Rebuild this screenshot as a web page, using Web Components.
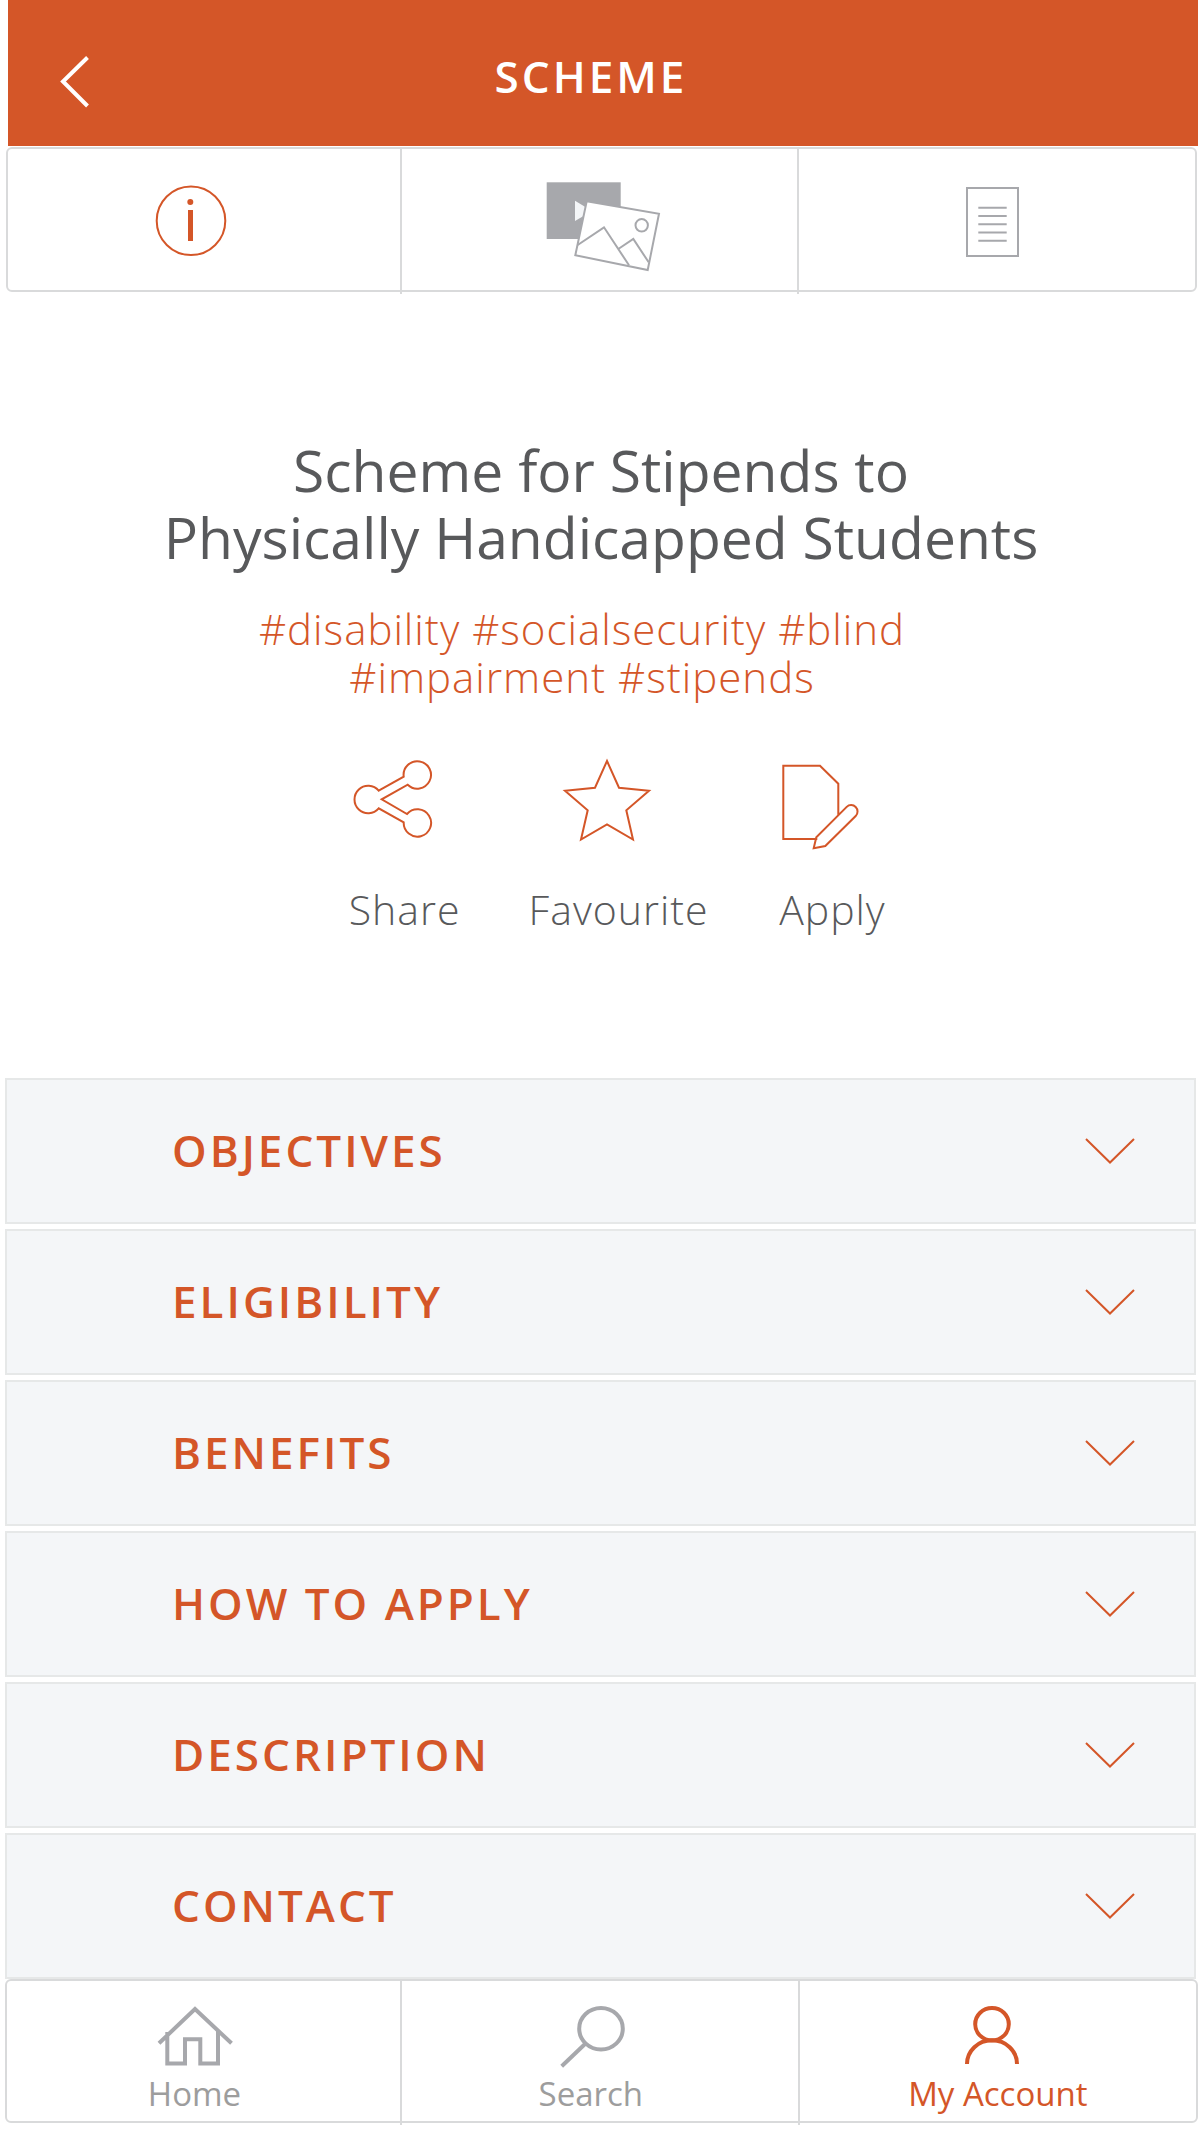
<!DOCTYPE html>
<html lang="en">
<head>
<meta charset="utf-8">
<meta name="viewport" content="width=device-width, initial-scale=1">
<title>Scheme</title>
<style>
  html { background: #fff; }
  body {
    margin: 0;
    font-family: "Open Sans", "Noto Sans", sans-serif;
    --accent: #d45628;
    --ink: #58595b;
    --muted: #a7a8ac;
    --line: #d9dadb;
    --panel: #f4f6f8;
    --panel-line: #e6e8e8;
  }
</style>
</head>
<body>
<scheme-page></scheme-page>

<script>
const ICONS = {
  back: ['0 0 30 54', 30, 54, '<path d="M27.500 2.500 3 26.500 27.500 51" stroke-width="4"/>'],
  info: ['0 0 120 91', 120, 91,
    '<circle cx="46" cy="46.700" r="34.300" stroke-width="2"/><g fill="currentColor" stroke="none"><circle cx="45.300" cy="28" r="3"/><rect x="43" y="36" width="5" height="31"/></g>'],
  media: ['0 0 120 91', 120, 91,
    '<rect x="5.700" y="8.300" width="74" height="56.700" fill="currentColor" stroke="none"/>' +
    '<path d="M34 26.700 51 36.900 34 47z" fill="#f4f6f8" stroke="none"/>' +
    '<g stroke-width="2"><path d="M45.700 27.300 118 39.700 106.700 96 34.300 81.300z" fill="#fff"/>' +
    '<circle cx="100.700" cy="51.300" r="6.200"/><path d="M36.700 71 63 53.300 88 91.300M77.300 75 92.300 65 107.700 88.300"/></g>'],
  doc: ['0 0 120 91', 120, 91,
    '<g stroke-width="2"><rect x="30" y="14" width="51" height="68"/><path d="M41.300 33.700h28.400M41.300 42h28.400M41.300 50.200h28.400M41.300 58.500h28.400M41.300 66.700h28.400"/></g>'],
  share: ['0 0 88 90', 88, 90,
    '<path stroke-width="2" d="M29.700 31.700 54.700 17.700A13.700 13.700 0 1 1 58.700 25.700L32.700 40.300 58 55A13.700 13.700 0 1 1 54.700 63.300L29.700 49.300A13.700 13.700 0 1 1 29.700 31.700z"/>'],
  star: ['0 0 88 90', 88, 90,
    '<path stroke-width="2" d="M44 2 56 28.700 86 31.700 63.300 51.300 70 80.500 44 65.300 18 80.500 24.700 51.300 2 31.700 32 28.700z"/>'],
  apply: ['0 0 88 90', 88, 90,
    '<path stroke-width="2" d="M62.300 56.300V24.700L44 6.700H7.300V80H41.300M37.700 89.300 40.300 78.300 70.700 47.900A6.400 6.400 0 0 1 79.700 57L49.300 87z"/>'],
  chevron: ['0 0 50 26', 50, 26, '<path d="M1 1 25 24.500 49 1" stroke-width="2"/>'],
  home: ['0 0 76 62', 76, 62,
    '<path stroke-width="4" d="M2 37.300 38 3 74.500 37.300M10.300 26V57.500H28V33.300H43.300V57.500H61V24"/>'],
  search: ['0 0 76 62', 76, 62,
    '<g stroke-width="4"><ellipse cx="48" cy="22.700" rx="21.800" ry="20.700"/><path d="M32 38 8.700 60.300"/></g>'],
  account: ['0 0 76 62', 76, 62,
    '<g stroke-width="4"><ellipse cx="32" cy="18.200" rx="16.800" ry="16.200"/><path d="M7 58A25 23.700 0 0 1 57 58"/></g>']
};

function define(name, css, html) {
  const tpl = document.createElement('template');
  tpl.innerHTML = `<style>*{box-sizing:border-box}${css}</style>${html}`;
  customElements.define(name, class extends HTMLElement {
    constructor() {
      super();
      this.attachShadow({ mode: 'open' }).append(tpl.content.cloneNode(true));
    }
    connectedCallback() {
      const label = this.getAttribute('label');
      const control = this.shadowRoot.querySelector('[data-control]');
      if (control && label) control.setAttribute('aria-label', label);
    }
  });
}

customElements.define('line-icon', class extends HTMLElement {
  constructor() {
    super();
    this.attachShadow({ mode: 'open' });
  }
  connectedCallback() {
    const [box, w, h, art] = ICONS[this.getAttribute('name')];
    this.shadowRoot.innerHTML =
      `<style>:host{display:block;flex:none}svg{display:block;overflow:visible}</style>
       <svg viewBox="${box}" width="${w}" height="${h}" fill="none" stroke="currentColor" aria-hidden="true">${art}</svg>`;
  }
});

define('app-header', `
  :host { display: grid; grid-template-columns: 107px 1fr 131px; align-items: start;
    height: 146px; box-sizing: border-box; padding-top: 46px; background: var(--accent); color: #fff; }
  button { display: grid; place-items: center; width: 100%; height: 72px; padding: 0 0 0 26px;
    border: 0; background: none; color: inherit; cursor: pointer; }
  h1 { margin: 0; text-align: center; font-size: 44px; line-height: 60px; font-weight: 600; letter-spacing: 3px; }
`, `<button type="button" aria-label="Back"><line-icon name="back"></line-icon></button><h1><slot></slot></h1>`);

define('segment-bar', `
  :host { display: grid; grid-template-columns: 298fr 300fr 299fr; box-sizing: border-box;
    border: 2px solid var(--line); border-radius: 6px; background: #fff; }
`, `<slot></slot>`);

const DIVIDER = `
  :host { display: grid; position: relative; }
  :host(:not(:last-child))::after { content: ""; position: absolute; top: 0; right: 0; bottom: -4px;
    width: 2px; background: var(--line); }
`;

define('media-tab', DIVIDER + `
  button { display: grid; place-items: center; height: 141px; padding: 0; border: 0; background: none;
    color: var(--muted); cursor: pointer; }
  :host([current]) button { color: var(--accent); }
`, `<button type="button" data-control><slot></slot></button>`);

define('nav-item', DIVIDER + `
  a { display: flex; flex-direction: column; align-items: center; gap: 4px; height: 140px; padding-top: 25px;
    color: #9d9d9d; text-decoration: none; font-size: 33px; line-height: 44px; }
  ::slotted(line-icon) { color: var(--muted); }
  :host(:not(:last-child)) a { padding-right: 20px; }
  :host([current]) a, :host([current]) ::slotted(line-icon) { color: var(--accent); }
`, `<a href="#"><slot name="icon"></slot><span><slot></slot></span></a>`);

define('hash-tag', `
  :host { display: inline; }
  a { color: var(--accent); text-decoration: none; }
`, `<a href="#"><slot></slot></a>`);

define('action-button', `
  :host { display: block; }
  button { display: flex; flex-direction: column; align-items: center; gap: 32px; padding: 0; border: 0;
    background: none; color: var(--ink); font: 300 41px/56px "Open Sans", "Noto Sans", sans-serif;
    letter-spacing: 1px; cursor: pointer; }
  ::slotted(line-icon) { padding-right: 24px; color: var(--accent); }
`, `<button type="button"><slot name="icon"></slot><span><slot></slot></span></button>`);

define('scheme-summary', `
  :host { display: block; padding: 145px 0 141px; text-align: center; }
  h2 { margin: 0; padding-right: 4px; color: var(--ink); font-size: 57px; line-height: 67px; font-weight: 400; }
  .tags { margin: 34px 0 0; padding-right: 42px; color: var(--accent); font-size: 42px; line-height: 48px;
    font-weight: 300; letter-spacing: 1px; }
  .actions { display: flex; justify-content: center; gap: 68px; margin-top: 58px; padding-left: 31px; }
`, `<h2><slot name="title"></slot></h2><p class="tags"><slot name="tags"></slot></p><div class="actions"><slot></slot></div>`);

define('accordion-row', `
  :host { display: block; }
  h2 { margin: 0; }
  button { display: flex; align-items: center; justify-content: space-between; width: 100%; height: 146px;
    padding: 0 59px 0 165px; border: 2px solid var(--panel-line); background: var(--panel); color: var(--accent);
    font: 600 44px/60px "Open Sans", "Noto Sans", sans-serif; letter-spacing: 3px; cursor: pointer; text-align: left; }
  span { padding-bottom: 2px; }
`, `<h2><button type="button" aria-expanded="false"><span><slot></slot></span><line-icon name="chevron"></line-icon></button></h2>`);

define('scheme-page', `
  :host { display: flex; flex-direction: column; padding-bottom: 10px; }
  app-header, scheme-summary { margin-left: 8px; }
  .tabs { margin: 1px 1px 0 6px; }
  .rows { display: grid; gap: 5px; margin: 0 2px 0 5px; }
  .nav { margin: 0 0 0 5px; }
`, `
  <app-header>SCHEME</app-header>
  <segment-bar class="tabs">
    <media-tab label="Information" current><line-icon name="info"></line-icon></media-tab>
    <media-tab label="Media"><line-icon name="media"></line-icon></media-tab>
    <media-tab label="Documents"><line-icon name="doc"></line-icon></media-tab>
  </segment-bar>
  <scheme-summary>
    <span slot="title">Scheme for Stipends to<br>Physically Handicapped Students</span>
    <span slot="tags"><hash-tag>#disability</hash-tag> <hash-tag>#socialsecurity</hash-tag> <hash-tag>#blind</hash-tag><br><hash-tag>#impairment</hash-tag> <hash-tag>#stipends</hash-tag></span>
    <action-button><line-icon slot="icon" name="share"></line-icon>Share</action-button>
    <action-button><line-icon slot="icon" name="star"></line-icon>Favourite</action-button>
    <action-button><line-icon slot="icon" name="apply"></line-icon>Apply</action-button>
  </scheme-summary>
  <div class="rows">
    <accordion-row>OBJECTIVES</accordion-row>
    <accordion-row>ELIGIBILITY</accordion-row>
    <accordion-row>BENEFITS</accordion-row>
    <accordion-row>HOW TO APPLY</accordion-row>
    <accordion-row>DESCRIPTION</accordion-row>
    <accordion-row>CONTACT</accordion-row>
  </div>
  <segment-bar class="nav" role="navigation">
    <nav-item><line-icon slot="icon" name="home"></line-icon>Home</nav-item>
    <nav-item><line-icon slot="icon" name="search"></line-icon>Search</nav-item>
    <nav-item current><line-icon slot="icon" name="account"></line-icon>My Account</nav-item>
  </segment-bar>
`);
</script>
</body>
</html>
